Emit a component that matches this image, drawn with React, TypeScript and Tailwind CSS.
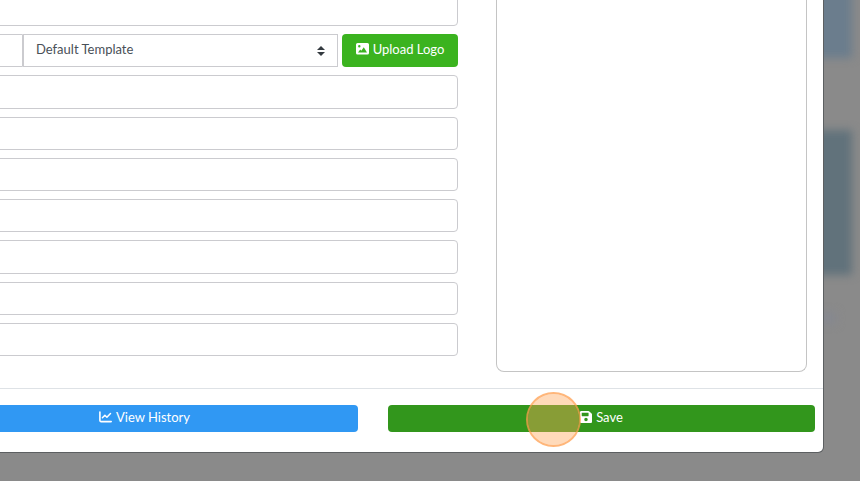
import React from 'react';
import { FaSave } from 'react-icons/fa';

const fields = [
  'Address line 1',
  'Address line 2',
  'City',
  'State',
  'Postal code',
  'Phone',
  'Email'
];

const inputClass = 'min-h-0 w-full flex-1 rounded-[4px] border border-[#cbcbcf] bg-white px-3 text-[#495057]';

const ChartIcon = () => (
  <svg viewBox="0 0 13 12" className="h-3 w-[13px]" fill="none" stroke="currentColor" strokeLinecap="round" strokeLinejoin="round">
    <path d="M.9 1v8.6q0 1 1 1h10.3" strokeWidth="1.6" />
    <path d="M3.4 6.8 5.9 4.3l2 1.9 3.6-3.7" strokeWidth="1.5" />
  </svg>
);

const ImageIcon = () => (
  <svg viewBox="0 0 13 12" className="h-3 w-[13px]" fill="currentColor" fillRule="evenodd">
    <path d="M1.6 0h9.8Q13 0 13 1.6v8.3q0 1.6-1.6 1.6H1.6Q0 11.5 0 9.9V1.6Q0 0 1.6 0ZM3.3 2.1a1.2 1.2 0 1 0 0 2.4 1.2 1.2 0 0 0 0-2.4ZM2 9.5h9L7.8 4.3 5.3 7.7 4.2 6.5Z" />
  </svg>
);

const Backdrop = () => (
  <div className="absolute inset-0 overflow-hidden bg-[#8a8a8a]">
    <div className="absolute -top-4 right-2 h-[74px] w-40 bg-[#6b7d8d] blur-xs"></div>
    <div className="absolute top-[130px] right-2 h-[145px] w-40 bg-[#61727b] blur-xs"></div>
    <div className="absolute top-[312px] right-6 h-3 w-4 bg-[#868890] blur-xs"></div>
  </div>
);

const TemplateRow = () => (
  <div className="flex min-h-[33px] flex-1">
    <input aria-label="Name" className="w-[84px] rounded-l-[4px] border border-[#cbcbcf] bg-white px-3" />
    <div className="relative flex flex-1">
      <select
        aria-label="Template"
        className="w-full appearance-none border border-[#cbcbcf] bg-white px-3 pb-1 text-[#495057]"
      >
        <option>Default Template</option>
      </select>
      <svg viewBox="0 0 8 10" className="pointer-events-none absolute top-3 right-[13px] h-[10px] w-2" fill="#343a40">
        <path d="M4 0 8 4H0ZM0 6h8L4 10Z" />
      </svg>
    </div>
    <button className="ml-1 flex w-[116px] items-center justify-center gap-1 rounded-[4px] bg-[#3bb31f] pb-1 text-white">
      <ImageIcon />
      Upload Logo
    </button>
  </div>
);

const App = () => {
  return (
    <div className="relative h-screen overflow-hidden font-['Lato',sans-serif] text-[13px] leading-5">
      <Backdrop />

      <div className="relative mr-[37px] -ml-[77px] -mt-[7px] rounded-[5px] bg-white shadow-[0_0_0_1px_#5c5f61]">
        {/* Form and preview */}
        <div className="flex gap-[38px] px-4 pb-4">
          <div className="flex flex-1 flex-col gap-2 pb-4">
            <input aria-label="Title" className={inputClass} />
            <TemplateRow />
            {fields.map((field) => (
              <input key={field} aria-label={field} className={inputClass} />
            ))}
          </div>
          <div className="min-h-[379px] w-[311px] rounded-b-lg border border-t-0 border-[#c4c4c4] bg-white"></div>
        </div>

        {/* Footer */}
        <div className="flex gap-[30px] border-t border-[#dee2e6] px-2 pt-4 pb-5">
          <button className="flex h-[27px] flex-1 items-center justify-center gap-1 rounded-[4px] bg-[#3098f3] pb-1 text-white">
            <ChartIcon />
            View History
          </button>
          <button className="relative flex h-[27px] flex-1 items-center justify-center gap-1 rounded-[4px] bg-[#32961c] pb-1 text-white">
            <FaSave className="h-[14px] w-3" />
            Save
            <span className="absolute -top-[13px] left-[138px] h-[55px] w-[55px] rounded-full border-2 border-[#ff9d4d]/75 bg-[#ffa75a]/42 bg-clip-padding"></span>
          </button>
        </div>
      </div>
    </div>
  );
};

export default App;
